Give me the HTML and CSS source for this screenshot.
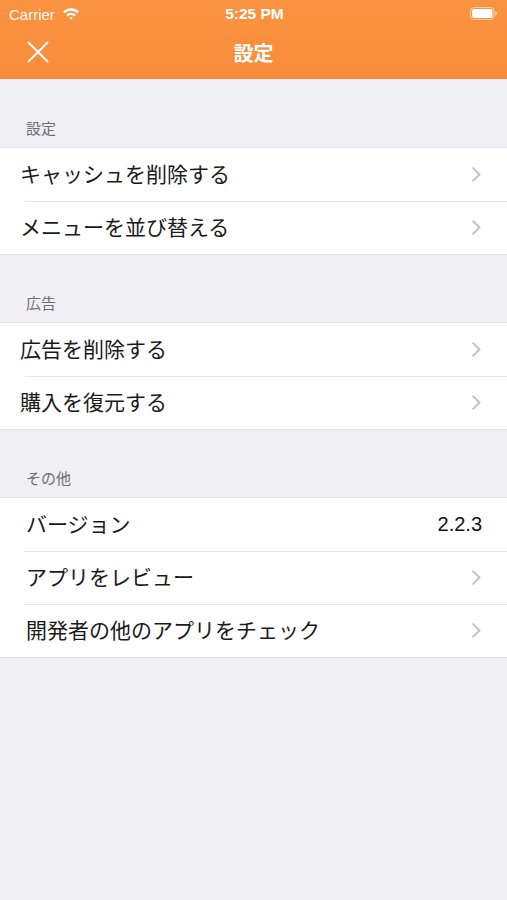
FILE: index.html
```html
<!DOCTYPE html>
<html lang="ja">
<head>
<meta charset="utf-8">
<link rel="stylesheet" href="styles.css">
</head>
<body>
<header class="topbar">
  <div class="status">
    <div class="status-left">
      <span class="carrier">Carrier</span>
      <svg class="wifi" width="18" height="14" viewBox="0 0 18 14">
        <path d="M1 4.6 A11.5 11.5 0 0 1 17 4.6 L15.3 6.3 A9 9 0 0 0 2.7 6.3 Z" fill="#fff"/>
        <path d="M4.1 7.7 A7 7 0 0 1 13.9 7.7 L12.2 9.4 A4.6 4.6 0 0 0 5.8 9.4 Z" fill="#fff"/>
        <path d="M7.2 10.8 A2.6 2.6 0 0 1 10.8 10.8 L9 12.8 Z" fill="#fff"/>
      </svg>
    </div>
    <span class="time">5:25 PM</span>
    <div class="status-right">
      <svg class="battery" width="27" height="13" viewBox="0 0 27 13">
        <rect x="0.5" y="0.5" width="23.5" height="12" rx="3.5" fill="none" stroke="#fff" stroke-opacity="0.55"/>
        <rect x="2" y="2" width="20.5" height="9" rx="2" fill="#fff"/>
        <path d="M25 4.5 a2 2 0 0 1 0 4 z" fill="#fff" fill-opacity="0.55"/>
      </svg>
    </div>
  </div>
  <nav class="navbar">
    <svg class="close" width="22" height="22" viewBox="0 0 22 22">
      <path d="M1.5 1.5 L20.5 20.5 M20.5 1.5 L1.5 20.5" stroke="#fff" stroke-width="2" stroke-linecap="round"/>
    </svg>
    <h1 class="title">設定</h1>
  </nav>
</header>

<main class="content">
  <section class="section">
    <div class="section-header">設定</div>
    <ul class="group">
      <li class="row"><span class="label">キャッシュを削除する</span><span class="chev"></span></li>
      <li class="row"><span class="label">メニューを並び替える</span><span class="chev"></span></li>
    </ul>
  </section>

  <section class="section">
    <div class="section-header">広告</div>
    <ul class="group">
      <li class="row"><span class="label">広告を削除する</span><span class="chev"></span></li>
      <li class="row"><span class="label">購入を復元する</span><span class="chev"></span></li>
    </ul>
  </section>

  <section class="section">
    <div class="section-header">その他</div>
    <ul class="group group-inset">
      <li class="row"><span class="label">バージョン</span><span class="value">2.2.3</span></li>
      <li class="row"><span class="label">アプリをレビュー</span><span class="chev"></span></li>
      <li class="row"><span class="label">開発者の他のアプリをチェック</span><span class="chev"></span></li>
    </ul>
  </section>
</main>
</body>
</html>
```
FILE: styles.css
```css
* { box-sizing: border-box; }
html, body {
  margin: 0;
  padding: 0;
}
body {
  width: 507px;
  min-height: 900px;
  background: #efeff4;
  font-family: "Liberation Sans", "Noto Sans CJK JP", sans-serif;
  color: #000;
}
.topbar {
  background: linear-gradient(#fa9341, #f98c3a);
  color: #fff;
  height: 79px;
  display: flex;
  flex-direction: column;
}
.status {
  height: 28px;
  display: grid;
  grid-template-columns: 1fr auto 1fr;
  align-items: center;
  padding: 0 9px;
}
.status-left {
  display: flex;
  align-items: center;
  gap: 7px;
}
.carrier {
  font-size: 15px;
  opacity: 0.95;
}
.wifi { display: block; margin-top: -1px; }
.time {
  font-size: 15.5px;
  font-weight: 600;
  padding-left: 2px;
}
.status-right {
  display: flex;
  justify-content: flex-end;
  padding-right: 1px;
}
.battery { display: block; margin-top: -1px; }
.navbar {
  flex: 1;
  display: flex;
  align-items: center;
  justify-content: center;
  position: relative;
}
.close {
  position: absolute;
  left: 27px;
  top: 13px;
}
.title {
  margin: 0;
  font-size: 20px;
  font-weight: 700;
  font-family: "Noto Sans CJK JP", sans-serif;
  margin-top: -3px;
}
.content {
  display: flex;
  flex-direction: column;
}
.section-header {
  height: 69px;
  display: flex;
  align-items: flex-end;
  padding: 0 0 10px 26px;
  font-size: 15px;
  color: #6d6d72;
  font-family: "Noto Sans CJK JP", sans-serif;
}
.group {
  list-style: none;
  margin: 0;
  padding: 0;
  background: #fff;
  box-shadow: 0 -1px 0 #e4e4e8, 0 1px 0 #e0e0e4;
}
.row {
  height: 53px;
  display: flex;
  align-items: center;
  justify-content: space-between;
  padding: 0 25px 0 20px;
  position: relative;
}
.row + .row::before {
  content: "";
  position: absolute;
  top: 0;
  left: 25px;
  right: 0;
  height: 1px;
  background: #e6e6ea;
}
.group-inset .row { padding-left: 26px; }
.group-inset .row + .row::before { left: 24px; }
.label {
  font-size: 21px;
  font-family: "Noto Sans CJK JP", sans-serif;
  color: #1a1a1a;
  line-height: 1;
  margin-top: -3px;
}
.value {
  font-size: 20px;
  color: #111;
  line-height: 1;
  margin-top: -1px;
}
.chev {
  width: 9px;
  height: 15px;
  margin-right: 1px;
  margin-top: -1px;
  background: no-repeat center / 9px 15px url("data:image/svg+xml;utf8,<svg xmlns='http://www.w3.org/2000/svg' width='9' height='15' viewBox='0 0 9 15'><path d='M1.2 1.2 L7.5 7.5 L1.2 13.8' fill='none' stroke='%23c4c4c8' stroke-width='2' stroke-linecap='round' stroke-linejoin='round'/></svg>");
}
```
